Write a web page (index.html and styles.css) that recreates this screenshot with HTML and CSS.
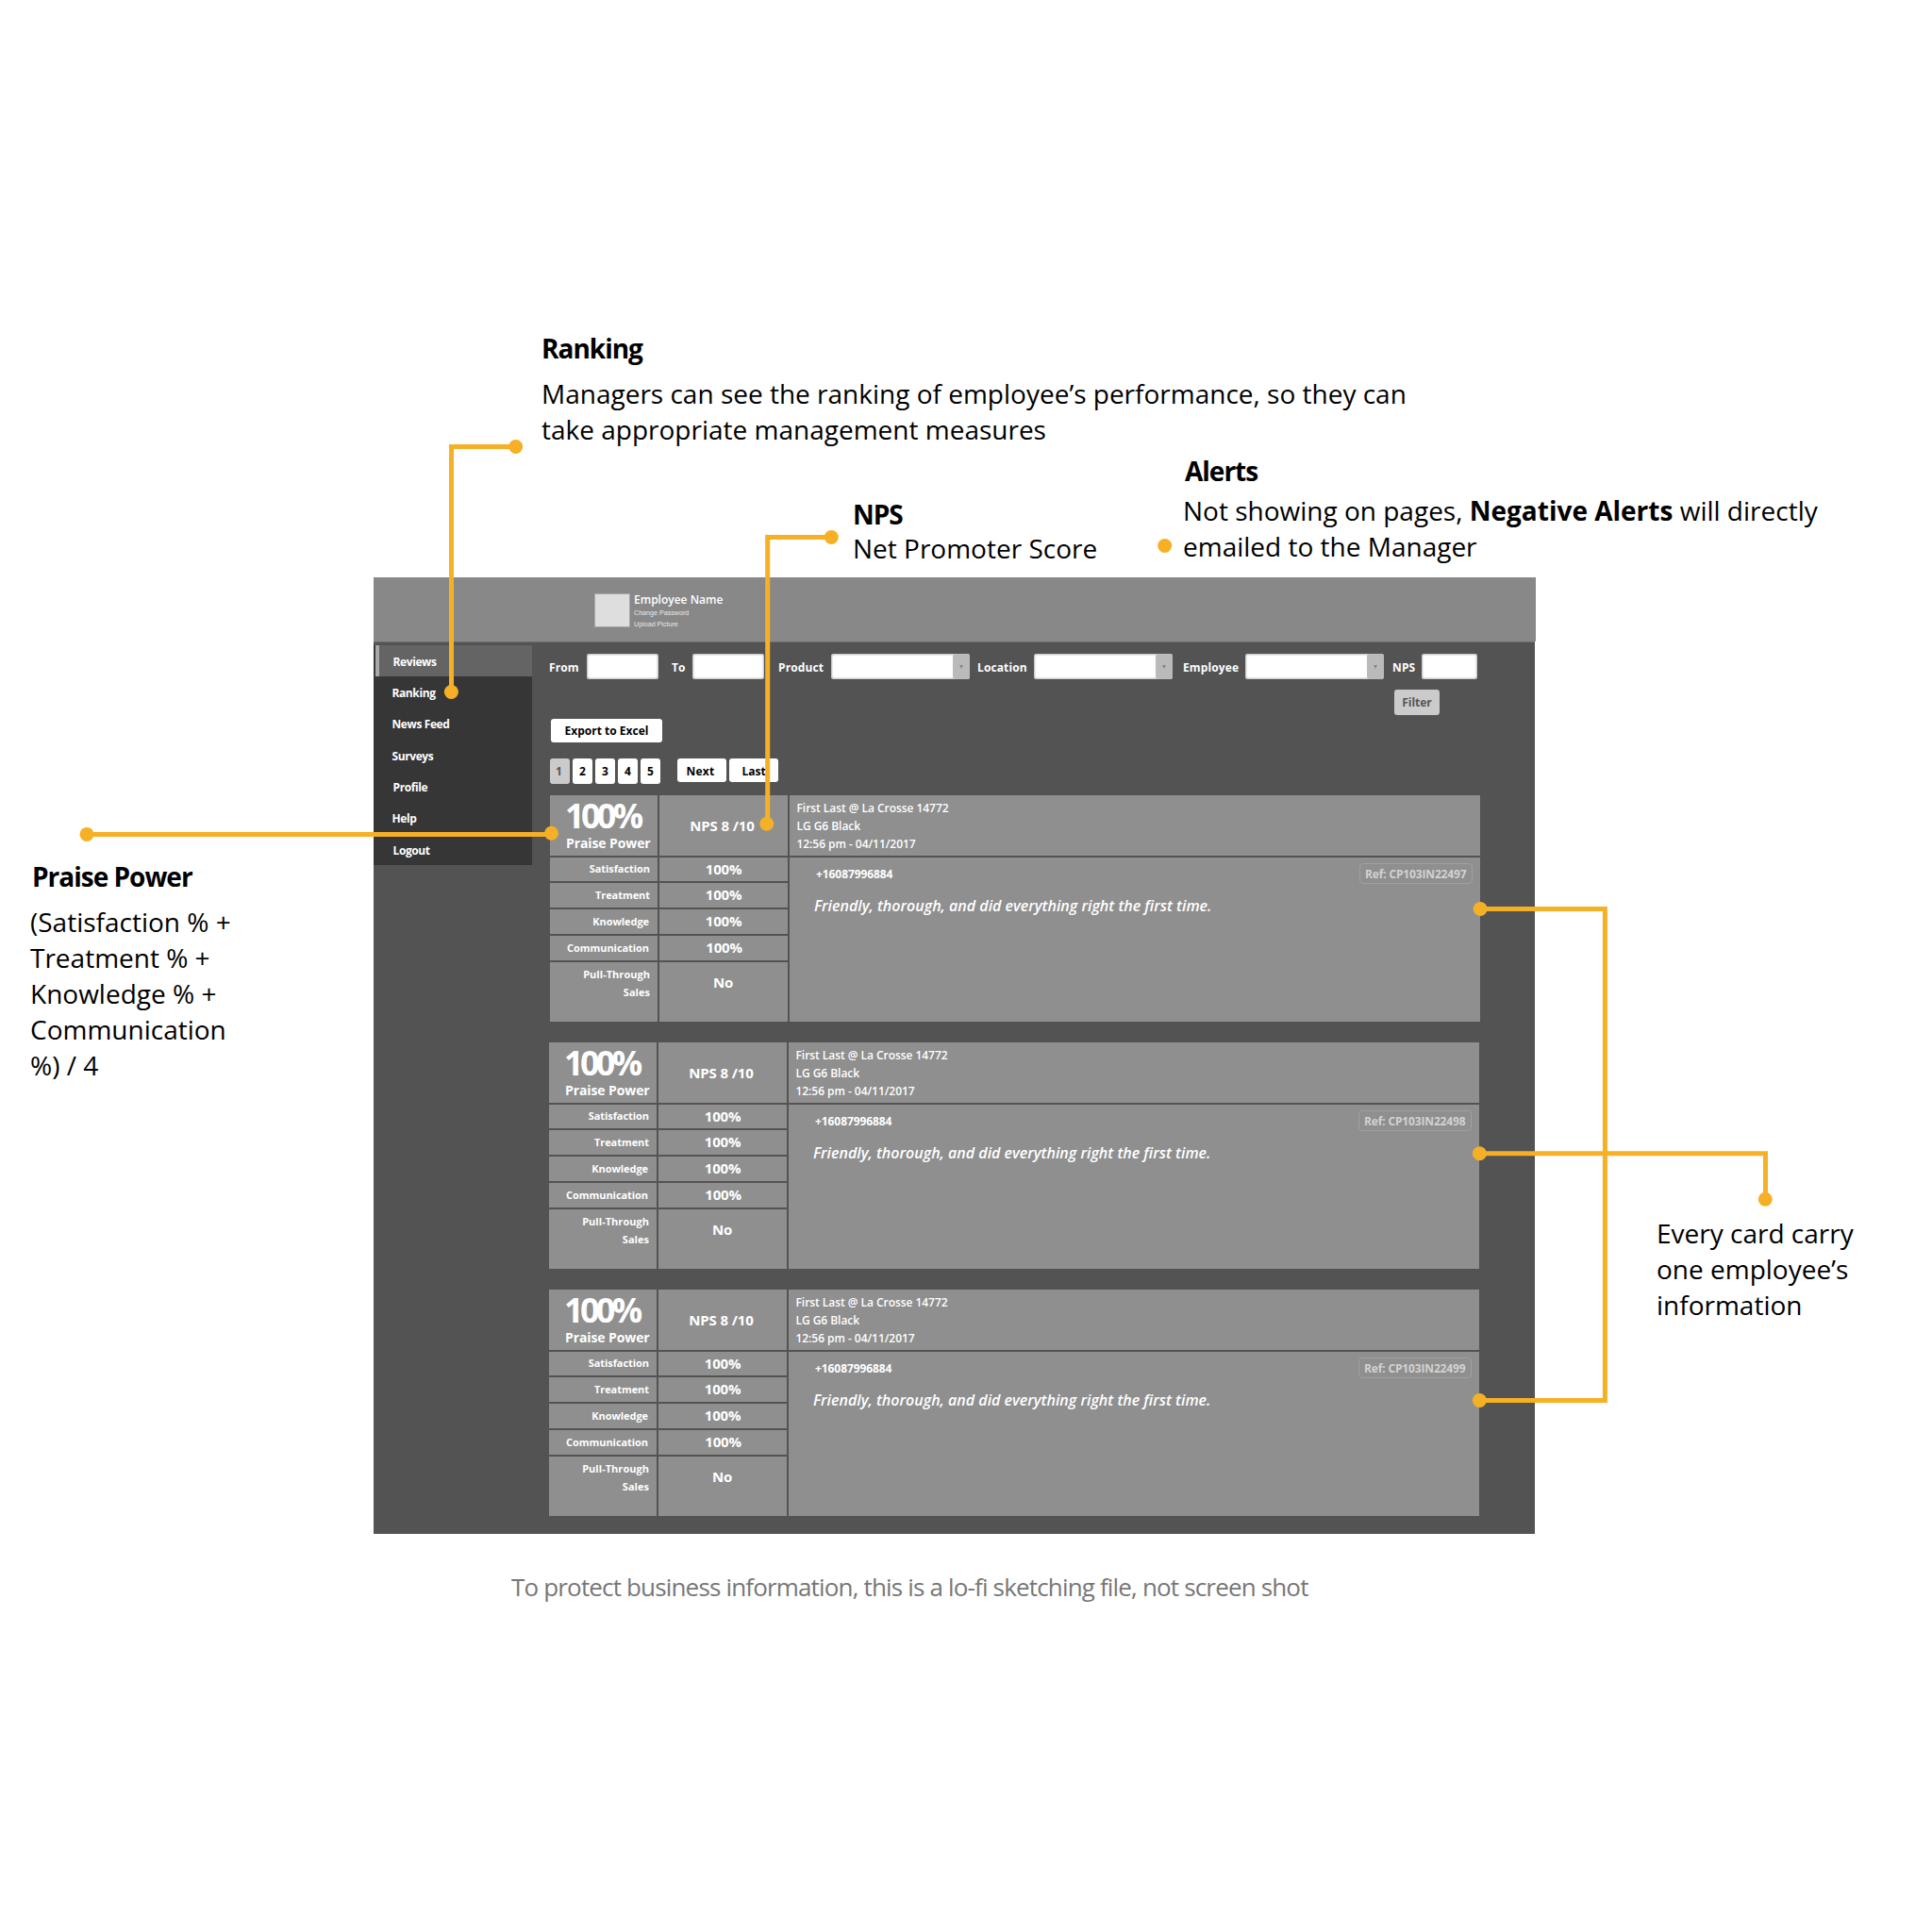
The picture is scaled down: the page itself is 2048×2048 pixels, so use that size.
FILE: index.html
```
<!DOCTYPE html>
<html lang="en">
<head>
<meta charset="utf-8">
<title>Reviews dashboard – annotated wireframe</title>
<link rel="stylesheet" href="styles.css">
</head>
<body>
<div class="board">
  <div class="app">
    <header class="topbar">
      <div class="avatar"></div>
      <div class="user">
        <div class="user-name">Employee Name</div>
        <div class="user-link">Change Password</div>
        <div class="user-link">Upload Picture</div>
      </div>
    </header>
    <div class="body">
      <nav class="side">
        <a class="item active indent">Reviews</a>
        <a class="item">Ranking</a>
        <a class="item">News Feed</a>
        <a class="item">Surveys</a>
        <a class="item indent">Profile</a>
        <a class="item">Help</a>
        <a class="item indent">Logout</a>
      </nav>
      <main class="content">
        <div class="filters">
          <span class="label">From</span><span class="input"></span>
          <span class="gap"></span>
          <span class="label">To</span><span class="input"></span>
          <span class="gap"></span>
          <span class="label">Product</span><span class="input select"><svg class="arrow" viewBox="0 0 18 27"><path d="M7 12h4l-2 4z"/></svg></span>
          <span class="gap"></span>
          <span class="label">Location</span><span class="input select"><svg class="arrow" viewBox="0 0 18 27"><path d="M7 12h4l-2 4z"/></svg></span>
          <span class="gap"></span>
          <span class="label">Employee</span><span class="input select"><svg class="arrow" viewBox="0 0 18 27"><path d="M7 12h4l-2 4z"/></svg></span>
          <span class="gap"></span>
          <span class="label">NPS</span><span class="input"></span>
        </div>
        <div class="filter-row"><span class="btn filter">Filter</span></div>
        <div class="export-row"><span class="btn export">Export to Excel</span></div>
        <div class="pager">
          <span class="page current">1</span>
          <span class="page">2</span>
          <span class="page">3</span>
          <span class="page">4</span>
          <span class="page">5</span>
          <span class="btn step next">Next</span>
          <span class="btn step last">Last</span>
        </div>
        <div class="cards">
          <section class="card first">
            <div class="cell power"><div class="big">100%</div><div class="power-label">Praise Power</div></div>
            <div class="cell nps">NPS 8 /10</div>
            <div class="cell info">First Last @ La Crosse 14772<br>LG G6 Black<br>12:56 pm - 04/11/2017</div>
            <div class="cell name">Satisfaction</div><div class="cell value">100%</div>
            <div class="cell name">Treatment</div><div class="cell value">100%</div>
            <div class="cell name inset">Knowledge</div><div class="cell value">100%</div>
            <div class="cell name inset">Communication</div><div class="cell value shifted">100%</div>
            <div class="cell name tall">Pull-Through<br>Sales</div><div class="cell value sale">No</div>
            <div class="cell review">
              <div class="review-top"><span class="phone">+16087996884</span><span class="ref">Ref: CP103IN22497</span></div>
              <div class="quote">Friendly, thorough, and did everything right the first time.</div>
            </div>
          </section>
          <section class="card">
            <div class="cell power"><div class="big">100%</div><div class="power-label">Praise Power</div></div>
            <div class="cell nps">NPS 8 /10</div>
            <div class="cell info">First Last @ La Crosse 14772<br>LG G6 Black<br>12:56 pm - 04/11/2017</div>
            <div class="cell name">Satisfaction</div><div class="cell value">100%</div>
            <div class="cell name">Treatment</div><div class="cell value">100%</div>
            <div class="cell name inset">Knowledge</div><div class="cell value">100%</div>
            <div class="cell name inset">Communication</div><div class="cell value shifted">100%</div>
            <div class="cell name tall">Pull-Through<br>Sales</div><div class="cell value sale">No</div>
            <div class="cell review">
              <div class="review-top"><span class="phone">+16087996884</span><span class="ref">Ref: CP103IN22498</span></div>
              <div class="quote">Friendly, thorough, and did everything right the first time.</div>
            </div>
          </section>
          <section class="card">
            <div class="cell power"><div class="big">100%</div><div class="power-label">Praise Power</div></div>
            <div class="cell nps">NPS 8 /10</div>
            <div class="cell info">First Last @ La Crosse 14772<br>LG G6 Black<br>12:56 pm - 04/11/2017</div>
            <div class="cell name">Satisfaction</div><div class="cell value">100%</div>
            <div class="cell name">Treatment</div><div class="cell value">100%</div>
            <div class="cell name inset">Knowledge</div><div class="cell value">100%</div>
            <div class="cell name inset">Communication</div><div class="cell value shifted">100%</div>
            <div class="cell name tall">Pull-Through<br>Sales</div><div class="cell value sale">No</div>
            <div class="cell review">
              <div class="review-top"><span class="phone">+16087996884</span><span class="ref">Ref: CP103IN22499</span></div>
              <div class="quote">Friendly, thorough, and did everything right the first time.</div>
            </div>
          </section>
        </div>
      </main>
    </div>
  </div>
  <p class="caption">To protect business information, this is a lo-fi sketching file, not screen shot</p>

  <!-- Connectors between the notes and the parts they describe -->
  <svg class="wires" viewBox="0 0 2048 2048">
    <g class="lines">
      <path d="M546.7 473.5H478.5V733.5"/>
      <path d="M881 569.5H813.7V873.5"/>
      <path d="M92 884.4H584.5"/>
      <path d="M1569 963.5H1701.4V1484.5H1568.3"/>
      <path d="M1568.3 1222.7H1871.5V1271"/>
    </g>
    <g class="dots">
      <circle cx="546.7" cy="473.5" r="7.5"/><circle cx="478.4" cy="733.5" r="7.5"/>
      <circle cx="881.3" cy="569.5" r="7.5"/><circle cx="812.8" cy="873.3" r="7.5"/>
      <circle cx="92" cy="884.4" r="7.5"/><circle cx="584.5" cy="883.3" r="7.5"/>
      <circle cx="1234.7" cy="578.5" r="7.5"/>
      <circle cx="1569.2" cy="963.5" r="7.5"/><circle cx="1568.4" cy="1222.7" r="7.5"/>
      <circle cx="1568.4" cy="1484.5" r="7.5"/><circle cx="1871.3" cy="1271.3" r="7.5"/>
    </g>
  </svg>

  <div class="note note-ranking"><h2>Ranking</h2><p>Managers can see the ranking of employee’s performance, so they can<br>take appropriate management measures</p></div>
  <div class="note note-nps"><h2>NPS</h2><p>Net Promoter Score</p></div>
  <div class="note note-alerts"><h2>Alerts</h2><p>Not showing on pages, <b>Negative Alerts</b> will directly<br>emailed to the Manager</p></div>
  <div class="note note-power"><h2>Praise Power</h2><p>(Satisfaction % +<br>Treatment % +<br>Knowledge % +<br>Communication<br>%) / 4</p></div>
  <div class="note note-card"><p>Every card carry<br>one employee’s<br>information</p></div>
</div>
</body>
</html>
```
FILE: styles.css
```
* { box-sizing: border-box; }
body { margin: 0; background: #fff; font-family: "Open Sans", sans-serif; }
.board { position: relative; width: 2048px; height: 2048px; padding: 612px 0 0 396px; overflow: hidden; }

.app { width: 1232px; height: 1014px; }
.topbar { display: flex; height: 68px; padding: 17px 0 0 234px; background: #888; }
.avatar { width: 38px; height: 36px; background: #dedede; border: 1px solid #a6a6a6; }
.user { padding-left: 4px; color: #fff; }
.user-name { height: 17px; font-size: 12px; font-weight: 600; line-height: 14px; letter-spacing: 0; }
.user-link { height: 12px; font: 7.1px/8.5px "Liberation Sans", sans-serif; letter-spacing: .02px; color: #e8e8e8; }

.body { display: flex; align-items: flex-start; width: 1231px; height: 946px; padding-top: 4px; background: #535353; border-top: 1px solid #6c6c6c; }
.side { width: 168px; margin-top: -1px; background: #363636; }
.item { display: flex; align-items: center; height: 33.35px; padding: 1px 0 0 19.5px; color: #fff; font-size: 12px; font-weight: 700; letter-spacing: -.4px; }
.indent { padding-left: 20.5px; }
.active { padding-left: 14.5px; margin-left: 2px; background: #646464; border-left: 4px solid #a9a9a9; }

.content { width: 1005px; padding: 8px 0 0 18px; font-size: 12px; font-weight: 700; }
.filters { display: grid; height: 27px; grid-template-columns: 40px 76px 14px 22px 76px 15px 56px 147px 8px 60px 147px 11px 66px 147px 9px 31px 59px; }
.label { padding: 6px 0 0 0; line-height: 17px; color: #fff; letter-spacing: .12px; white-space: nowrap; }
.input { display: flex; justify-content: flex-end; height: 27px; background: #fff; border-radius: 3px; box-shadow: inset 0 0 2px 1px #b8b8b8; overflow: hidden; }
.arrow { width: 18px; height: 27px; background: #bababa; border-radius: 3px; fill: #858585; }
.btn { display: flex; align-items: center; justify-content: center; background: #fff; border-radius: 3px; color: #000; white-space: nowrap; }
.filter-row { display: flex; padding: 11px 0 0 896px; }
.filter { width: 48px; height: 27px; background: #cbcbcb; color: #555; }
.export-row { display: flex; padding: 4px 0 0 2px; }
.export { width: 118px; height: 25px; }
.pager { display: flex; gap: 3px; padding: 17px 0 0 1px; height: 56px; }
.page { display: flex; align-items: center; justify-content: center; width: 21px; height: 27px; background: #fff; border-radius: 3px; color: #000; }
.current { background: #cbcbcb; color: #555; padding-right: 2px; }
.step { width: 52px; height: 25px; padding-top: 1px; letter-spacing: .3px; }
.next { margin-left: 15px; padding-right: 3px; }
.last { margin-left: 0; letter-spacing: 0; }

.cards { display: flex; flex-direction: column; gap: 22px; }
.card { display: grid; width: 986px; height: 240px; gap: 2px; grid-template-columns: 114px 136px 1fr; grid-template-rows: 64px 25px 26px 26px 26px 63px; color: #fff; }
.first { margin-left: 1px; }
.cell { background: #8f8f8f; }
.power { padding: 1px 0 0 16px; white-space: nowrap; }
.big { height: 39px; font-size: 36px; line-height: 41px; letter-spacing: -3.7px; }
.power-label { padding-left: 1px; font-size: 14px; line-height: 22px; letter-spacing: -.1px; }
.nps { display: flex; align-items: center; justify-content: center; padding: 0 3px 0 0; font-size: 15px; letter-spacing: -.12px; }
.info { padding: 5px 0 0 7.5px; font-weight: 600; line-height: 18.9px; letter-spacing: -.05px; }
.name { display: flex; align-items: center; justify-content: flex-end; padding: 0 8px 2px 0; font-size: 11px; letter-spacing: -.06px; text-align: right; }
.inset { padding-right: 9px; }
.value { display: flex; align-items: center; justify-content: center; padding: 0 0 2px; font-size: 15px; letter-spacing: -.2px; }
.shifted { padding-left: 1px; }
.tall { align-items: flex-start; padding-top: 4px; line-height: 18.7px; letter-spacing: .03px; }
.sale { align-items: flex-start; padding: 11px 1px 0 0; letter-spacing: -.3px; }
.review { grid-column: 3; grid-row: 2 / 7; padding: 6px 8px 0 28px; }
.review-top { display: flex; justify-content: space-between; align-items: center; height: 22px; }
.phone { letter-spacing: -.08px; }
.ref { width: 120px; height: 22px; border: 1px solid #a0a0a0; border-radius: 4px; padding: 1px 0 0 5px; line-height: 20px; color: #d2d2d2; letter-spacing: -.15px; white-space: nowrap; }
.quote { margin: 12px 0 0 -2px; font-size: 16px; line-height: 22px; font-style: italic; font-weight: 600; }

.caption { margin: 38px 0 0 146px; font-size: 26px; line-height: 36px; letter-spacing: -.835px; color: #777; white-space: nowrap; }

.wires { position: absolute; left: 0; top: 0; width: 2048px; height: 2048px; }
.lines { fill: none; stroke: #f6b026; stroke-width: 5; }
.dots { fill: #f6b026; }

.note { position: absolute; font-size: 28px; line-height: 38px; color: #000; white-space: nowrap; }
.note h2 { margin: 0; font-size: 28px; font-weight: 700; letter-spacing: -1px; }
.note p { margin: 0; }
.note-ranking { left: 574px; top: 350px; }
.note-ranking p { margin-top: 10px; }
.note-nps { left: 904px; top: 526px; }
.note-nps p { margin-top: -2px; }
.note-alerts { left: 1254px; top: 480px; }
.note-alerts h2 { padding-left: 2px; }
.note-alerts p { margin-top: 4px; }
.note-power { left: 32px; top: 910px; }
.note-power h2 { padding-left: 2px; }
.note-power p { margin-top: 10px; }
.note-card { left: 1756px; top: 1288px; }
```
